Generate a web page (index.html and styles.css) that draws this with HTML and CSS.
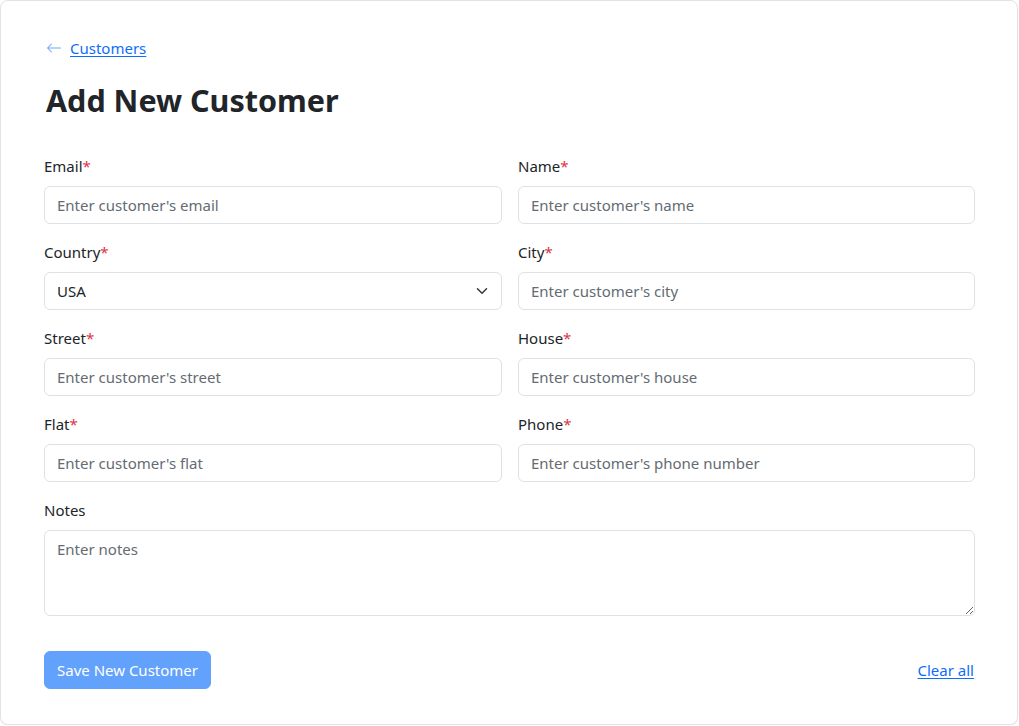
FILE: index.html
```html
<!DOCTYPE html>
<html lang="en">
<head>
<meta charset="utf-8">
<title>Add New Customer</title>
<link rel="stylesheet" href="styles.css">
</head>
<body>
<div class="card">
  <a class="back" href="#">
    <svg class="back-icon" width="16" height="16" viewBox="0 0 16 16" aria-hidden="true">
      <path d="M15 8a.5.5 0 0 0-.5-.5H2.707l3.147-3.146a.5.5 0 1 0-.708-.708l-4 4a.5.5 0 0 0 0 .708l4 4a.5.5 0 0 0 .708-.708L2.707 8.5H14.5A.5.5 0 0 0 15 8"/>
    </svg>
    <span class="back-text">Customers</span>
  </a>
  <h1 class="title">Add New Customer</h1>
  <form class="form">
    <div class="grid">
      <div class="field">
        <label class="label">Email<span class="req">*</span></label>
        <input class="control" type="text" placeholder="Enter customer's email">
      </div>
      <div class="field">
        <label class="label">Name<span class="req">*</span></label>
        <input class="control" type="text" placeholder="Enter customer's name">
      </div>
      <div class="field">
        <label class="label">Country<span class="req">*</span></label>
        <div class="select-wrap">
          <select class="control select">
            <option>USA</option>
          </select>
          <svg class="chevron" width="16" height="12" viewBox="0 0 16 16" aria-hidden="true">
            <path d="m2 5 6 6 6-6" fill="none" stroke="#343a40" stroke-width="2" stroke-linecap="round" stroke-linejoin="round"/>
          </svg>
        </div>
      </div>
      <div class="field">
        <label class="label">City<span class="req">*</span></label>
        <input class="control" type="text" placeholder="Enter customer's city">
      </div>
      <div class="field">
        <label class="label">Street<span class="req">*</span></label>
        <input class="control" type="text" placeholder="Enter customer's street">
      </div>
      <div class="field">
        <label class="label">House<span class="req">*</span></label>
        <input class="control" type="text" placeholder="Enter customer's house">
      </div>
      <div class="field">
        <label class="label">Flat<span class="req">*</span></label>
        <input class="control" type="text" placeholder="Enter customer's flat">
      </div>
      <div class="field">
        <label class="label">Phone<span class="req">*</span></label>
        <input class="control" type="text" placeholder="Enter customer's phone number">
      </div>
      <div class="field wide">
        <label class="label">Notes</label>
        <textarea class="control area" rows="3" placeholder="Enter notes"></textarea>
      </div>
    </div>
    <div class="actions">
      <button class="btn" type="button" disabled>Save New Customer</button>
      <a class="clear" href="#">Clear all</a>
    </div>
  </form>
</div>
</body>
</html>
```
FILE: styles.css
```css
* {
  box-sizing: border-box;
}

html, body {
  margin: 0;
  padding: 0;
  background: #ffffff;
}

body {
  font-family: "Noto Sans", "Open Sans", sans-serif;
  font-size: 15px;
  line-height: 24px;
  color: #212529;
}

.card {
  width: 1018px;
  height: 725px;
  border: 1px solid #e2e3e5;
  border-radius: 8px;
  padding: 35px 42px 0 43px;
  background: #fff;
  box-shadow: 0 1px 2px rgba(0, 0, 0, 0.06);
}

.back {
  display: inline-flex;
  align-items: center;
  gap: 8px;
  color: #0d6efd;
  text-decoration: none;
  margin-left: 2px;
}

.back-icon {
  fill: #6ea8fe;
  margin-top: -1px;
}

.back-text {
  text-decoration: underline;
  text-underline-offset: 2px;
}

.title {
  margin: 19px 0 35px 2px;
  font-size: 30.5px;
  line-height: 38px;
  font-weight: 700;
  color: #212529;
}

.form {
  margin: 0;
}

.grid {
  display: grid;
  grid-template-columns: 458px 457px;
  column-gap: 16px;
  row-gap: 16px;
}

.field {
  display: flex;
  flex-direction: column;
}

.field.wide {
  grid-column: 1 / -1;
}

.label {
  display: block;
  line-height: 24px;
  margin-bottom: 8px;
}

.req {
  color: #dc3545;
}

.control {
  display: block;
  width: 100%;
  height: 38px;
  padding: 6px 12px;
  font-family: inherit;
  font-size: 15px;
  line-height: 24px;
  color: #212529;
  background: #fff;
  border: 1px solid #dee2e6;
  border-radius: 6px;
  outline: none;
}

.control::placeholder {
  color: #646b72;
  opacity: 1;
}

.select-wrap {
  position: relative;
}

.select {
  appearance: none;
  -webkit-appearance: none;
  padding-right: 36px;
}

.chevron {
  position: absolute;
  right: 12px;
  top: 13px;
  pointer-events: none;
}

.area {
  height: 86px;
  resize: vertical;
}

.actions {
  display: flex;
  justify-content: space-between;
  align-items: center;
  margin-top: 35px;
}

.btn {
  height: 38px;
  padding: 0 12px;
  font-family: inherit;
  font-size: 15px;
  line-height: 24px;
  color: #fff;
  background: #62a2fd;
  border: 1px solid #62a2fd;
  border-radius: 6px;
}

.clear {
  color: #0d6efd;
  text-decoration: underline;
  text-underline-offset: 2px;
  margin-right: 1px;
}
```
